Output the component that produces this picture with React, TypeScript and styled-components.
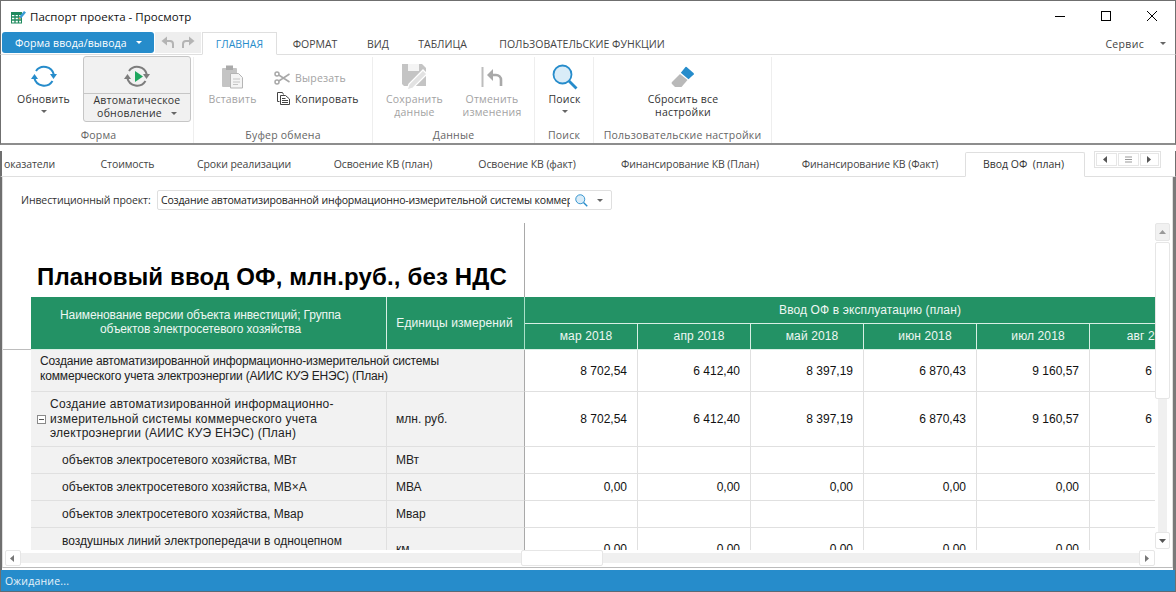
import React from "react";
import styled, { createGlobalStyle } from "styled-components";

const Global = createGlobalStyle`
  html, body { margin: 0; padding: 0; background: #fff; overflow: hidden; }
  * { box-sizing: border-box; }
`;
const UI = `"Open Sans", "Noto Sans", "Liberation Sans", sans-serif`;
const GRID = `"Liberation Sans", Arial, sans-serif`;

const Win = styled.div`
  width: 1176px; height: 592px; display: flex; flex-direction: column;
  border-top: 1px solid #6f6f6f; background: #fff; font-family: ${UI}; font-size: 10.5px; color: #333;
  overflow: hidden;
`;
const TitleBar = styled.div`
  height: 30px; flex: none; display: flex; align-items: center; padding-left: 10px; border-left: 1px solid #6f6f6f; border-right: 1px solid #6f6f6f;
`;
const TitleText = styled.div`
  margin-left: 4px; font-size: 11.5px; color: #111; flex: 1; letter-spacing: 0.003em;
`;
const WinBtns = styled.div`display: flex;`;
const WinBtn = styled.div`
  width: 46px; height: 30px; display: flex; align-items: center; justify-content: center;
`;
const MenuBar = styled.div`
  height: 24px; flex: none; display: flex; align-items: flex-start; padding: 1px 0 0 1px; border-bottom: 1px solid #dfdfdf;
  border-left: 1px solid #6f6f6f; border-right: 1px solid #6f6f6f; position: relative;
`;
const FormBtn = styled.div`
  width: 152px; height: 21px; background: #268ccb; border-radius: 3px; color: #fff; display: flex; align-items: center;
  padding-left: 13px; gap: 9px; font-size: 10.5px; letter-spacing: .01em;
`;
const UndoBox = styled.div`
  width: 46px; height: 21px; background: #eeeeee; margin-left: 1px; display: flex; align-items: center; justify-content: space-around; padding: 0 3px;
`;
const MenuTab = styled.div<{ $active?: boolean; $w: number }>`
  width: ${p => p.$w}px; height: 23px; display: flex; align-items: center; justify-content: center; font-size: 10.5px; white-space: nowrap;
  color: ${p => (p.$active ? "#268ccb" : "#444")};
  ${p => p.$active ? "background:#fff;border:1px solid #dfdfdf;border-bottom:1px solid #fff;margin-left:1px;" : ""}
`;
const Spacer = styled.div`flex: 1;`;
const Service = styled.div`
  display: flex; align-items: center; height: 23px; gap: 16px; font-size: 10.5px; color: #444; padding-right: 9px; letter-spacing: .03em;
`;
const Ribbon = styled.div`
  height: 90px; flex: none; display: flex; padding-left: 3px; border-bottom: 2px solid #8d8d8d;
  border-left: 1px solid #6f6f6f; border-right: 1px solid #6f6f6f;
`;
const Group = styled.div<{ $w: number }>`
  width: ${p => p.$w}px; border-right: 1px solid #eeeeee; margin-top: 2px; display: flex; flex-direction: column; position: relative;
`;
const GroupBody = styled.div`flex: 1; display: flex; min-height: 0;`;
const GroupLabel = styled.div`
  height: 16px; flex: none; text-align: center; font-size: 10.5px; color: #666; letter-spacing: .02em; line-height: 16px;
`;
const Big = styled.div<{ $w: number; $off?: boolean }>`
  width: ${p => p.$w}px; display: flex; flex-direction: column; align-items: center; padding-top: 6px; text-align: center; line-height: 13px;
  font-size: 10.5px; color: ${p => (p.$off ? "#a3a3a3" : "#333")}; flex: none; letter-spacing: .02em;
`;
const BigIcon = styled.div`height: 27px; margin-bottom: 3px; display: flex; align-items: center; justify-content: center;`;
const Caret = styled.span`
  display: inline-block; width: 0; height: 0; border-left: 3px solid transparent; border-right: 3px solid transparent; border-top: 3px solid #666; flex: none;
`;
const CaretW = styled(Caret)`border-top-color: #fff;`;
const CaretBox = styled.div`height: 11px; display: flex; align-items: center; justify-content: center;`;
const AutoBtn = styled.div`
  width: 108px; height: 66px; border: 1px solid #c6c6c6; border-radius: 3px; background: #f1f1f1; flex: none; margin-top: -1px; display: flex; flex-direction: column; align-items: center; text-align: center;
`;
const AutoTop = styled.div`height: 37px; width: 100%; flex: none; border-bottom: 1px solid #c6c6c6; display: flex; align-items: center; justify-content: center; padding-top: 3px;`;
const AutoLabel = styled.div`line-height: 13px; font-size: 10.5px; letter-spacing: .02em;`;
const AutoLine = styled.div`display: flex; align-items: center; justify-content: center; gap: 9px;`;
const SmallCol = styled.div`display: flex; flex-direction: column; padding-top: 13px; margin-left: 3px; gap: 6px;`;
const SmallBtn = styled.div<{ $off?: boolean }>`
  display: flex; align-items: center; gap: 5px; height: 15px; font-size: 10.5px; letter-spacing: .02em; color: ${p => (p.$off ? "#a3a3a3" : "#333")};
`;
const SmallIcon = styled.div`width: 16px; display: flex; justify-content: flex-end; flex: none;`;
const TabStrip = styled.div`
  margin-top: 6px; height: 26px; flex: none; display: flex; align-items: flex-end; border-bottom: 1px solid #dfdfdf;
  border-left: 2px solid #6f6f6f; border-right: 1px solid #6f6f6f; position: relative; padding-left: 2px;
`;
const DocTab = styled.div<{ $w: number; $first?: boolean }>`
  width: ${p => p.$w}px; height: 25px; flex: none; display: flex; align-items: center; justify-content: ${p => (p.$first ? "flex-start" : "center")}; font-size: 10.5px; color: #444; white-space: nowrap;
  letter-spacing: -0.01em;
`;
const ActiveTab = styled(DocTab)`
  background: #fff; border: 1px solid #dfdfdf; border-bottom: 1px solid #fff; margin: 0 0 -1px 5px; border-radius: 2px 2px 0 0; color: #333;
  padding: 0 3px 1px 0; letter-spacing: 0;
`;
const TabNav = styled.div`
  display: flex; margin-left: 9px; align-self: flex-start; gap: 1px; padding: 1px; border: 1px solid #e2e2e2; background: #fff;
`;
const NavBtn = styled.div<{ $w: number }>`
  width: ${p => p.$w}px; height: 13px; border: 1px solid #e6e6e6; display: flex; align-items: center; justify-content: center;
`;
const Panel = styled.div`
  flex: 1; min-height: 0; display: flex; flex-direction: column; border-left: 2px solid #6f6f6f; border-right: 3px solid #7a7a7a; padding-bottom: 2px;
`;
const PanelInner = styled.div`
  flex: 1; min-height: 0; border-left: 1px solid #dfdfdf; border-right: 1px solid #dfdfdf; border-bottom: 1px solid #bcbcbc; display: flex; flex-direction: column;
`;
const FilterRow = styled.div`
  height: 46px; flex: none; display: flex; align-items: flex-start; padding: 13px 0 0 18px; gap: 4px;
`;
const FilterLabel = styled.div`font-size: 10.5px; color: #333; height: 20px; line-height: 20px; width: 132px; white-space: nowrap; letter-spacing: -0.1px;`;
const Combo = styled.div`
  width: 455px; height: 20px; border: 1px solid #dfdfdf; border-radius: 2px; display: flex; align-items: center; padding-left: 3px;
  font-size: 10.5px; color: #222;
`;
const ComboText = styled.div`width: 409px; overflow: hidden; white-space: nowrap; flex: none; letter-spacing: -0.18px;`;
const ComboIcons = styled.div`display: flex; align-items: center; gap: 9px; margin-left: 5px;`;
const GridWrap = styled.div`
  flex: none; display: grid; grid-template-columns: 1152px 16px; grid-template-rows: 327px 17px;
`;
const Viewport = styled.div`overflow: hidden; position: relative;`;
const Sheet = styled.table`
  border-collapse: separate; border-spacing: 0; table-layout: fixed; width: 1213px; font-family: ${GRID}; font-size: 12px; color: #222;
`;
const TitleCell = styled.td`
  height: 74px; border-right: 1px solid #a9a9a9; vertical-align: bottom; padding: 0 0 6px 34px; font-size: 24px; font-weight: 700; color: #000; white-space: nowrap; letter-spacing: 0.15px; line-height: 28px;
`;
const Gutter = styled.td<{ $line?: boolean }>`
  padding: 0; ${p => (p.$line ? "border-bottom:1px solid #bdbdbd;" : "")}
`;
const Head = styled.th<{ $end?: boolean; $pad?: string; $ls?: string }>`
  background: #239265; color: #eef7f3; font-weight: 400; font-size: 12px; text-align: center; padding: ${p => p.$pad ?? "0 6px 1px"}; line-height: 14px;
  border-right: 1px solid ${p => (p.$end ? "#a9e0c8" : "#d8efe4")}; border-bottom: 1px solid #d8efe4; letter-spacing: ${p => p.$ls ?? "0.12px"}; white-space: nowrap;
`;
const Row = styled.tr<{ $h: number }>`height: ${p => p.$h}px;`;
const Label = styled.td<{ $indent: number; $ls?: string; $bottom?: number }>`
  background: #f2f2f2; border-right: 1px solid #e0e0e0; border-bottom: 1px solid #e0e0e0; padding: 0 8px ${p => p.$bottom ?? 0}px ${p => p.$indent}px; line-height: 14.5px; color: #222; position: relative;
  letter-spacing: ${p => p.$ls ?? "0"};
`;
const Unit = styled.td`
  background: #f2f2f2; border-right: 1px solid #a9a9a9; border-bottom: 1px solid #e0e0e0; padding: 0 0 0 9px; line-height: 14px;
`;
const WideLabel = styled(Label)`border-right: 1px solid #a9a9a9; white-space: nowrap;`;
const Val = styled.td`
  border-right: 1px solid #e0e0e0; border-bottom: 1px solid #e0e0e0; text-align: right; padding: 0 10px 0 0; white-space: nowrap; color: #111;
`;
const Toggle = styled.span`
  position: absolute; left: 6px; top: 50%; margin-top: -4px; width: 9px; height: 9px; border: 1px solid #8a8a8a; background: #fff; display: block;
  &::after { content: ""; position: absolute; left: 1px; right: 1px; top: 3px; height: 1px; background: #555; }
`;
const VScroll = styled.div`display: flex; flex-direction: column; align-items: stretch; padding-right: 1px; padding-bottom: 1px;`;
const HScroll = styled.div`display: flex; align-items: stretch; padding: 0 0 1px 2px;`;
const SBtn = styled.div<{ $grey?: boolean }>`
  flex: none; width: 15px; height: 17px; border: 1px solid #e6e6e6; border-radius: 2px; background: ${p => (p.$grey ? "#f1f1f1" : "#fff")}; display: flex; align-items: center; justify-content: center;
`;
const UpBtn = styled(SBtn)`height: 18px; margin-bottom: 1px;`;
const SThumbV = styled.div`flex: none; height: 157px; border: 1px solid #e6e6e6; border-radius: 2px; background: #fff;`;
const STrackV = styled.div`flex: 1; background: #f0f0f0; border-left: 3px solid #fff; border-right: 3px solid #fff;`;
const STrackH = styled.div<{ $w?: number }>`
  ${p => (p.$w ? `width:${p.$w}px;flex:none;` : "flex:1;")} background: #f0f0f0; border-top: 3px solid #fff; border-bottom: 3px solid #fff;
`;
const SThumbH = styled.div`flex: none; width: 82px; border: 1px solid #e6e6e6; border-radius: 2px; background: #fff;`;
const HBtn = styled(SBtn)`height: 16px; width: 16px;`;
const Corner = styled.div``;
const Status = styled.div`
  height: 22px; flex: none; background: #268ccb; color: #e8f3fa; font-size: 10.5px; display: flex; align-items: center; padding-left: 4px; letter-spacing: .2px;
  border-left: 1px solid #6f6f6f; border-right: 1px solid #6f6f6f; border-bottom: 1px solid #5b6b76;
`;

const Tri = ({ d, c = "#555" }: { d: "l" | "r" | "u" | "d"; c?: string }) => {
  const p = { l: "5,1 5,8 1,4.5", r: "2,1 2,8 6,4.5", u: "1,6 8,6 4.5,2", d: "1,3 8,3 4.5,7" }[d];
  return <svg width="9" height="9" viewBox="0 0 9 9"><polygon points={p} fill={c} /></svg>;
};

const AppIcon = () => (
  <svg width="15" height="15" viewBox="0 0 15 15">
    <rect x="0.5" y="3.5" width="10" height="10.5" fill="#fff" stroke="#1f8a5e" />
    <rect x="0" y="3" width="11" height="3" fill="#1f8a5e" />
    <path d="M1 8h9M1 11h9M4 6v8M7.5 6v8" stroke="#1f8a5e" strokeWidth="1.3" />
    <path d="M8 8l5-6 2 1.5-5 6-2.5 1z" fill="#3a9bd6" />
    <path d="M8 8l2 1.5-2.5 1z" fill="#e8a33c" />
  </svg>
);

const Refresh = ({ c, play }: { c: string; play?: boolean }) => (
  <svg width="26" height="26" viewBox="0 0 26 26" fill="none">
    <path d="M5 7 A10 10 0 0 1 22.8 10.5" stroke={c} strokeWidth="2" />
    <path d="M21.5 17 A10 10 0 0 1 3.3 14" stroke={c} strokeWidth="2" />
    <polygon points="19,10 26,10 22.5,15" fill={c} />
    <polygon points="0,15 7,15 3.5,10" fill={c} />
    {play && <polygon points="11,7 11,18 19,12.5" fill="#1fa75f" />}
  </svg>
);

const Paste = () => (
  <svg width="22" height="24" viewBox="0 0 22 24">
    <rect x="0" y="3" width="15" height="19" rx="1" fill="#c4c4c4" />
    <rect x="4" y="0.5" width="7" height="4.5" fill="#aaa" />
    <path d="M8.5 8.5h8l4 4v10.5h-12z" fill="#f4f4f4" stroke="#b5b5b5" />
    <path d="M11 14h7M11 17h7M11 19.5h5" stroke="#c4c4c4" />
  </svg>
);
const Scissors = () => (
  <svg width="16" height="14" viewBox="0 0 16 14" fill="none" stroke="#a8a8a8" strokeWidth="1.5">
    <circle cx="3" cy="3" r="2" /><circle cx="3" cy="11" r="2" />
    <path d="M4.8 4l10.7 7M4.8 10l10.7-7" />
  </svg>
);
const Copy = () => (
  <svg width="13" height="13" viewBox="0 0 13 13" fill="none" stroke="#444">
    <path d="M2.5 9.5H.5V.5h5l1 2" />
    <path d="M3.5 3.5h5l4 3.5v5.5h-9z" fill="#fff" />
    <path d="M5 6.5h3.5M5 8.5h6M5 10.5h6" />
  </svg>
);
const Save = () => (
  <svg width="26" height="26" viewBox="0 0 26 26">
    <path d="M0 0h20l4 4v18H2l-2-2z" fill="#c4c4c4" />
    <rect x="6" y="0" width="11" height="7" fill="#f4f4f4" />
    <path d="M5 26l2-6L21 6l4 4-14 14z" fill="#e2e2e2" stroke="#fff" strokeWidth="1.3" />
  </svg>
);
const UndoBig = () => (
  <svg width="22" height="22" viewBox="0 0 22 22" fill="none">
    <rect x="0.5" y="1" width="2" height="20" fill="#bdbdbd" />
    <path d="M9 9h6a5 5 0 0 1 5 5v6" stroke="#a9a9a9" strokeWidth="2.6" />
    <polygon points="12,3 12,15 6,9" fill="#a9a9a9" />
  </svg>
);
const Search = ({ s = 26 }: { s?: number }) => (
  <svg width={s} height={s} viewBox="0 0 26 26" fill="none">
    <circle cx="10.5" cy="10.5" r="9" fill="#d9ecf8" stroke="#268ccb" strokeWidth="1.8" />
    <path d="M17 17l7.5 7.5" stroke="#268ccb" strokeWidth="2.8" />
  </svg>
);
const Eraser = () => (
  <svg width="24" height="22" viewBox="0 0 24 22">
    <path d="M9 8 L16.5 14 L10.5 21 H4 L1 18 Q0 17 1 16 Z" fill="#b9b9b9" />
    <path d="M9.8 6.8 L14.5 1 Q15 0.5 15.6 1 L22.5 7 Q23.3 7.8 22.7 8.5 L17.5 13.3 Z" fill="#268ccb" />
  </svg>
);
const Curve = ({ flip }: { flip?: boolean }) => (
  <svg width="14" height="14" viewBox="0 0 14 14" fill="none" style={flip ? { transform: "scaleX(-1)" } : undefined}>
    <path d="M4 5h5a3 3 0 0 1 3 3v4" stroke="#b4b4b4" strokeWidth="2" />
    <polygon points="6,0.5 6,9.5 0.5,5" fill="#b4b4b4" />
  </svg>
);

const months = ["мар 2018", "апр 2018", "май 2018", "июн 2018", "июл 2018", "авг 2018"];
const plan = ["8 702,54", "6 412,40", "8 397,19", "6 870,43", "9 160,57", "6 412,40"];
const zero = ["0,00", "0,00", "0,00", "0,00", "0,00", "0,00"];
const empty = ["", "", "", "", "", ""];
const Vals = ({ v }: { v: string[] }) => <>{v.map((x, i) => <Val key={i}>{x}</Val>)}</>;

const rows = [
  { h: 27, label: "объектов электросетевого хозяйства, МВт", unit: "МВт", v: empty },
  { h: 27, label: "объектов электросетевого хозяйства, МВ×А", unit: "МВА", v: zero },
  { h: 27, label: "объектов электросетевого хозяйства, Мвар", unit: "Мвар", v: empty },
  { h: 42, label: "воздушных линий электропередачи в одноцепном исполнении, км", unit: "км", v: zero },
];
const tabs: [string, number][] = [
  ["оказатели", 75], ["Стоимость", 97], ["Сроки реализации", 136], ["Освоение КВ (план)", 142], ["Освоение КВ (факт)", 146], ["Финансирование КВ (План)", 180], ["Финансирование КВ (Факт)", 180],
];

export default function App() {
  return (
    <Win>
      <Global />
      <TitleBar>
        <AppIcon />
        <TitleText>Паспорт проекта - Просмотр</TitleText>
        <WinBtns>
          <WinBtn><svg width="10" height="10"><path d="M0 5.5h10" stroke="#000" /></svg></WinBtn>
          <WinBtn><svg width="10" height="10"><rect x=".5" y=".5" width="9" height="9" fill="none" stroke="#000" /></svg></WinBtn>
          <WinBtn><svg width="10" height="10"><path d="M0 0l10 10M10 0L0 10" stroke="#000" /></svg></WinBtn>
        </WinBtns>
      </TitleBar>
      <MenuBar>
        <FormBtn>Форма ввода/вывода <CaretW /></FormBtn>
        <UndoBox><Curve /><Curve flip /></UndoBox>
        <MenuTab $active $w={75}>ГЛАВНАЯ</MenuTab>
        <MenuTab $w={76}>ФОРМАТ</MenuTab>
        <MenuTab $w={50}>ВИД</MenuTab>
        <MenuTab $w={79}>ТАБЛИЦА</MenuTab>
        <MenuTab $w={200}>ПОЛЬЗОВАТЕЛЬСКИЕ ФУНКЦИИ</MenuTab>
        <Spacer />
        <Service>Сервис <Caret /></Service>
      </MenuBar>
      <Ribbon>
        <Group $w={190}>
          <GroupBody>
            <Big $w={79}><BigIcon><Refresh c="#268ccb" /></BigIcon>Обновить<CaretBox><Caret /></CaretBox></Big>
            <AutoBtn>
              <AutoTop><Refresh c="#7d7d7d" play /></AutoTop>
              <AutoLabel>Автоматическое<AutoLine>обновление <Caret /></AutoLine></AutoLabel>
            </AutoBtn>
          </GroupBody>
          <GroupLabel>Форма</GroupLabel>
        </Group>
        <Group $w={179}>
          <GroupBody>
            <Big $w={77} $off><BigIcon><Paste /></BigIcon>Вставить</Big>
            <SmallCol>
              <SmallBtn $off><SmallIcon><Scissors /></SmallIcon>Вырезать</SmallBtn>
              <SmallBtn><SmallIcon><Copy /></SmallIcon>Копировать</SmallBtn>
            </SmallCol>
          </GroupBody>
          <GroupLabel>Буфер обмена</GroupLabel>
        </Group>
        <Group $w={162}>
          <GroupBody>
            <Big $w={83} $off><BigIcon><Save /></BigIcon>Сохранить данные</Big>
            <Big $w={72} $off><BigIcon><UndoBig /></BigIcon>Отменить изменения</Big>
          </GroupBody>
          <GroupLabel>Данные</GroupLabel>
        </Group>
        <Group $w={59}>
          <GroupBody>
            <Big $w={59}><BigIcon><Search /></BigIcon>Поиск<CaretBox><Caret /></CaretBox></Big>
          </GroupBody>
          <GroupLabel>Поиск</GroupLabel>
        </Group>
        <Group $w={178}>
          <GroupBody>
            <Big $w={178}><BigIcon><Eraser /></BigIcon>Сбросить все<br />настройки</Big>
          </GroupBody>
          <GroupLabel>Пользовательские настройки</GroupLabel>
        </Group>
      </Ribbon>
      <TabStrip>
        {tabs.map(([t, w], i) => <DocTab key={t} $w={w} $first={i === 0}>{t}</DocTab>)}
        <ActiveTab $w={120}>Ввод ОФ&nbsp;&nbsp;(план)</ActiveTab>
        <TabNav>
          <NavBtn $w={21}><Tri d="l" /></NavBtn>
          <NavBtn $w={21}><svg width="9" height="7"><path d="M1 1h7M1 3.5h7M1 6h7" stroke="#999" /></svg></NavBtn>
          <NavBtn $w={19}><Tri d="r" /></NavBtn>
        </TabNav>
      </TabStrip>
      <Panel>
        <PanelInner>
          <FilterRow>
            <FilterLabel>Инвестиционный проект:</FilterLabel>
            <Combo>
              <ComboText>Создание автоматизированной информационно-измерительной системы коммерческого учета</ComboText>
              <ComboIcons><Search s={13} /><Caret /></ComboIcons>
            </Combo>
          </FilterRow>
          <GridWrap>
            <Viewport>
              <Sheet>
                <colgroup>
                  <col style={{ width: 28 }} /><col style={{ width: 356 }} /><col style={{ width: 138 }} />
                  <col style={{ width: 113 }} /><col style={{ width: 113 }} /><col style={{ width: 113 }} /><col style={{ width: 113 }} /><col style={{ width: 113 }} /><col style={{ width: 113 }} /><col style={{ width: 13 }} />
                </colgroup>
                <tbody>
                  <tr><TitleCell colSpan={3}>Плановый ввод ОФ, млн.руб., без НДС</TitleCell></tr>
                  <Row $h={27}>
                    <Gutter rowSpan={2} $line />
                    <Head rowSpan={2} $pad="0 20px 3px 4px" $ls="-0.12px">Наименование версии объекта инвестиций; Группа<br />объектов электросетевого хозяйства</Head>
                    <Head rowSpan={2} $end $pad="0 7px 1px 5px">Единицы измерений</Head>
                    <Head colSpan={7}>Ввод ОФ в эксплуатацию (план)</Head>
                  </Row>
                  <Row $h={26}>{months.map(m => <Head key={m} $pad="0 0 1px 10px">{m}</Head>)}</Row>
                  <Row $h={42}>
                    <Gutter />
                    <WideLabel $indent={9} colSpan={2} $ls="-0.17px" $bottom={4}>Создание автоматизированной информационно-измерительной системы<br />коммерческого учета электроэнергии (АИИС КУЭ ЕНЭС) (План)</WideLabel>
                    <Vals v={plan} />
                  </Row>
                  <Row $h={55}>
                    <Gutter />
                    <Label $indent={19} $ls="0.25px"><Toggle />Создание автоматизированной информационно-<br />измерительной системы коммерческого учета<br />электроэнергии (АИИС КУЭ ЕНЭС) (План)</Label>
                    <Unit>млн. руб.</Unit>
                    <Vals v={plan} />
                  </Row>
                  {rows.map(r => (
                    <Row $h={r.h} key={r.label}>
                      <Gutter />
                      <Label $indent={31}>{r.label}</Label>
                      <Unit>{r.unit}</Unit>
                      <Vals v={r.v} />
                    </Row>
                  ))}
                </tbody>
              </Sheet>
            </Viewport>
            <VScroll>
              <UpBtn $grey><Tri d="u" c="#999" /></UpBtn>
              <SThumbV />
              <STrackV />
              <SBtn><Tri d="d" /></SBtn>
            </VScroll>
            <HScroll>
              <HBtn><Tri d="l" c="#777" /></HBtn>
              <STrackH $w={500} />
              <SThumbH />
              <STrackH />
              <HBtn><Tri d="r" c="#777" /></HBtn>
            </HScroll>
            <Corner />
          </GridWrap>
        </PanelInner>
      </Panel>
      <Status>Ожидание...</Status>
    </Win>
  );
}
